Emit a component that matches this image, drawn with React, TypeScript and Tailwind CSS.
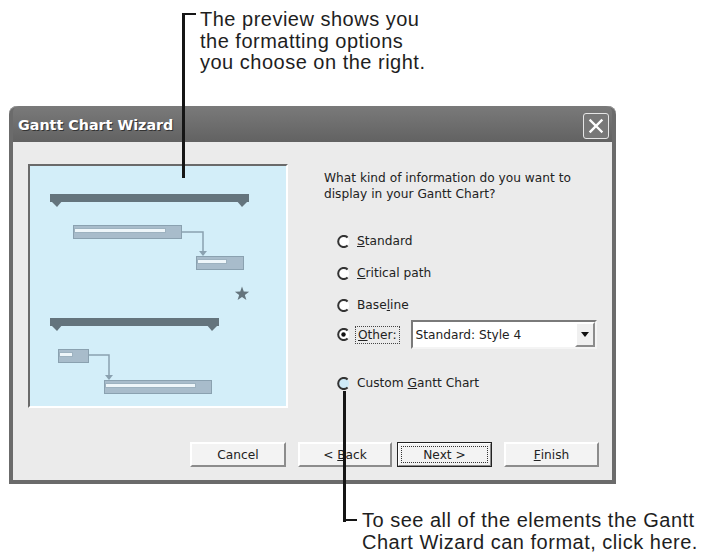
import React from 'react';

// ─── Preview drawing ─────────────────────────────────────────────────────────

const BAR = '#64747d';
const TASK_FILL = '#a8bccb';
const TASK_LINE = '#8aa1b0';

function Summary({ x1, x2, y }: { x1: number; x2: number; y: number }) {
  return (
    <g fill={BAR}>
      <rect x={x1} y={y} width={x2 - x1} height={8} />
      <polygon points={`${x1},${y + 6} ${x1 + 13},${y + 6} ${x1 + 7},${y + 13}`} />
      <polygon points={`${x2 - 13},${y + 6} ${x2},${y + 6} ${x2 - 7},${y + 13}`} />
    </g>
  );
}

function Task({ x, y, w, p }: { x: number; y: number; w: number; p: number }) {
  return (
    <g>
      <rect x={x + 0.5} y={y + 0.5} width={w} height={13} fill={TASK_FILL} stroke={TASK_LINE} />
      <rect x={x + 1.5} y={y + 3.5} width={p} height={4} fill="#eef6fa" stroke="#9db2c0" />
    </g>
  );
}

function Link({ x1, x2, y, y2 }: { x1: number; x2: number; y: number; y2: number }) {
  return (
    <g>
      <polyline points={`${x1},${y} ${x2},${y} ${x2},${y2 - 4}`} fill="none" stroke={TASK_LINE} strokeWidth={1.5} />
      <polygon points={`${x2 - 4},${y2 - 5} ${x2 + 4},${y2 - 5} ${x2},${y2}`} fill={TASK_LINE} />
    </g>
  );
}

function Preview() {
  return (
    <div className="w-[260px] h-[244px] shrink-0 bg-[#d3eef9] border-2 border-t-[#6a6a6a] border-l-[#6a6a6a] border-r-white border-b-white">
      <svg width="256" height="240" viewBox="2 2 256 240">
        <Summary x1={22} x2={221} y={30} />
        <Task x={45} y={61} w={108} p={91} />
        <Link x1={154} x2={175} y={68} y2={92} />
        <Task x={168} y={92} w={47} p={29} />
        <polygon
          fill={BAR}
          points="214,122.5 215.76,127.57 221.13,127.68 216.85,130.93 218.41,136.07 214,133 209.59,136.07 211.15,130.93 206.87,127.68 212.24,127.57"
        />
        <Summary x1={22} x2={191} y={154} />
        <Task x={30} y={185} w={30} p={13} />
        <Link x1={61} x2={81} y={191} y2={216} />
        <Task x={76} y={216} w={107} p={90} />
      </svg>
    </div>
  );
}

// ─── Form controls ───────────────────────────────────────────────────────────

function Radio({ checked = false, hover = false }: { checked?: boolean; hover?: boolean }) {
  return (
    <svg width="13" height="13" viewBox="0 0 13 13" className="shrink-0">
      <circle cx="6.5" cy="6.5" r="5.6" fill={hover ? '#cfeaf7' : '#fff'} />
      <path d="M10.6 2.4 A5.6 5.6 0 1 0 10.6 10.6" stroke="#333" strokeWidth="2" fill="none" />
      {checked && <circle cx="6.5" cy="6.5" r="2.2" fill="#111" />}
    </svg>
  );
}

function Option({ label, hover, className = '' }: { label: React.ReactNode; hover?: boolean; className?: string }) {
  return (
    <div className={`flex items-center gap-[7px] ml-[13px] h-[16px] ${className}`}>
      <Radio hover={hover} />
      <span>{label}</span>
    </div>
  );
}

function Button({ children, className = '', isDefault = false }: { children: React.ReactNode; className?: string; isDefault?: boolean }) {
  if (isDefault) {
    return (
      <div className={`h-[25px] border border-[#222] ${className}`}>
        <div className="h-full border border-t-white border-l-white border-r-[#8c8c8c] border-b-[#8c8c8c] bg-[#f3f3f3] p-[2px]">
          <div className="h-full flex items-center justify-center border border-dotted border-[#333]">{children}</div>
        </div>
      </div>
    );
  }
  return (
    <div className={`h-[25px] flex items-center justify-center bg-[#f3f3f3] border-2 border-t-white border-l-white border-r-[#8c8c8c] border-b-[#8c8c8c] ${className}`}>
      {children}
    </div>
  );
}

// ─── Dialog ──────────────────────────────────────────────────────────────────

function Dialog() {
  return (
    <div className="ml-[9px] w-[607px] h-[378px] flex flex-col rounded-t-[8px] bg-[#6b6b6b] px-[4px] pb-[4px] shadow-[inset_0_1px_0_#9a9a9a]">
      {/* title bar */}
      <div className="h-[36px] shrink-0 flex items-center justify-between pl-[5px] pr-[3px] pt-[3px] bg-gradient-to-b from-[#7a7a7a] to-[#626262] rounded-t-[6px]">
        <span className="font-['DejaVu_Sans',sans-serif] font-bold text-[14.3px] text-white [text-shadow:1px_1px_0_#333]">
          Gantt Chart Wizard
        </span>
        <div className="w-[26px] h-[26px] rounded-[3px] border-[1.5px] border-[#e6e6e6] bg-[#787878] flex items-center justify-center">
          <svg width="16" height="16" viewBox="0 0 16 16">
            <path d="M2.5 2.5 L13.5 13.5 M13.5 2.5 L2.5 13.5" stroke="#fff" strokeWidth="2.4" strokeLinecap="square" />
          </svg>
        </div>
      </div>

      {/* body */}
      <div className="flex-1 flex flex-col bg-[#ebebeb] text-[12.2px] leading-[16px] text-[#222] font-['DejaVu_Sans',sans-serif]">
        <div className="flex pl-[15px] pt-[22px]">
          <Preview />
          <div className="ml-[36px] flex flex-col">
            <p className="mt-[6px]">
              What kind of information do you want to
              <br />
              display in your Gantt Chart?
            </p>
            <Option className="mt-[31px]" label={<><u>S</u>tandard</>} />
            <Option className="mt-[16px]" label={<><u>C</u>ritical path</>} />
            <Option className="mt-[16px]" label={<>Base<u>l</u>ine</>} />
            <div className="mt-[7px] h-[29px] flex items-center ml-[13px]">
              <Radio checked />
              <span className="ml-[5px] px-[2px] border border-dotted border-[#444]">
                <u>O</u>ther:
              </span>
              <div className="ml-[11px] w-[186px] h-[29px] flex bg-white border-2 border-t-[#7a7a7a] border-l-[#7a7a7a] border-r-[#f4f4f4] border-b-[#f4f4f4]">
                <span className="flex-1 flex items-center pl-[3px]">Standard: Style 4</span>
                <div className="w-[20px] h-full flex items-center justify-center bg-[#f0f0f0] border-2 border-t-white border-l-white border-r-[#8c8c8c] border-b-[#8c8c8c]">
                  <svg width="8" height="5" viewBox="0 0 8 5">
                    <polygon points="0,0 8,0 4,5" fill="#111" />
                  </svg>
                </div>
              </div>
            </div>
            <Option className="mt-[26px]" hover label={<>Custom <u>G</u>antt Chart</>} />
          </div>
        </div>

        <div className="mt-auto flex justify-end pr-[13px] pb-[13px]">
          <Button className="w-[96px]">Cancel</Button>
          <Button className="w-[94px] ml-[12px]">&lt;&nbsp;<u>B</u>ack</Button>
          <Button isDefault className="w-[95px] ml-[5px]">Next &gt;</Button>
          <Button className="w-[95px] ml-[12px]"><u>F</u>inish</Button>
        </div>
      </div>
    </div>
  );
}

// ─── Page ────────────────────────────────────────────────────────────────────

export default function App() {
  return (
    <div className="relative w-[703px] h-[559px] bg-white overflow-hidden">
      <div className="h-[106px] pl-[200px] pt-[9px] text-[20px] tracking-[0.5px] leading-[21.5px] text-[#1e1e1e] font-['Liberation_Sans',Arial,sans-serif]">
        <p>The preview shows you</p>
        <p>the formatting options</p>
        <p>you choose on the right.</p>
      </div>

      <Dialog />

      <div className="pl-[362px] pt-[25px] text-[20px] tracking-[0.5px] leading-[22px] text-[#1e1e1e] font-['Liberation_Sans',Arial,sans-serif]">
        <p>To see all of the elements the Gantt</p>
        <p>Chart Wizard can format, click here.</p>
      </div>

      {/* callout lines */}
      <div className="absolute left-[182px] top-[13px] w-[3px] h-[165px] bg-[#151515]" />
      <div className="absolute left-[182px] top-[13px] w-[14px] h-[2px] bg-[#151515]" />
      <div className="absolute left-[343px] top-[391px] w-[3px] h-[131px] bg-[#151515]" />
      <div className="absolute left-[343px] top-[519px] w-[14px] h-[2px] bg-[#151515]" />
    </div>
  );
}
